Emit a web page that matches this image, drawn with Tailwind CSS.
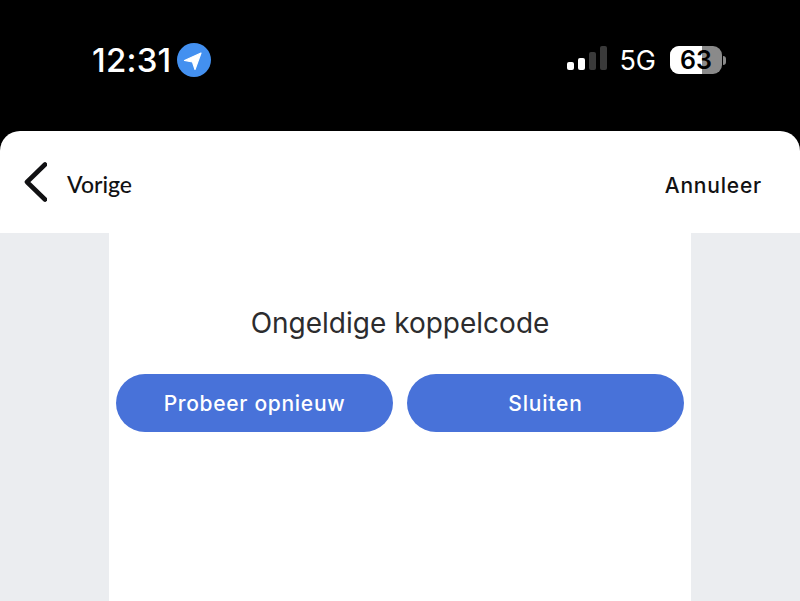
<!DOCTYPE html>
<html lang="nl">
  <head>
    <meta charset="UTF-8" />
    <meta name="viewport" content="width=device-width, initial-scale=1.0" />
    <title>Koppelcode</title>
    <script src="https://cdn.jsdelivr.net/npm/@tailwindcss/browser@4"></script>
  </head>
  <body class="bg-black h-[601px] w-[800px] overflow-hidden flex flex-col font-['Inter',sans-serif]">
    <!-- status bar -->
    <div class="h-[131px] shrink-0 flex justify-between items-start pt-[43px] pl-[92px] pr-[74px] text-white">
      <div class="flex items-center gap-[6px] h-[34px]">
        <span class="text-[33px] font-medium leading-none tracking-[0.2px]">12:31</span>
        <svg width="34" height="34" viewBox="0 0 34 34">
          <circle cx="17" cy="17" r="17" fill="#4390f0" />
          <path d="M7.5 17.5 L24 10 L18 26.5 L15.5 19 Z" fill="#fff" stroke="#fff" stroke-width="1.2" stroke-linejoin="round" />
        </svg>
      </div>
      <div class="flex items-center h-[34px]">
        <div class="flex items-end gap-[4px] h-[24px] mb-[4px] mr-[12px]">
          <div class="w-[7px] h-[8px] rounded-[2px] bg-white"></div>
          <div class="w-[7px] h-[12px] rounded-[2px] bg-white"></div>
          <div class="w-[7px] h-[18px] rounded-[2px] bg-[#3a3a3a]"></div>
          <div class="w-[7px] h-[24px] rounded-[2px] bg-[#3a3a3a]"></div>
        </div>
        <span class="text-[27px] leading-none mr-[14px]">5G</span>
        <div class="relative w-[52px] h-[28px] rounded-[9px] overflow-hidden bg-[#8a8a8a] flex items-center justify-center">
          <div class="absolute left-0 top-0 bottom-0 w-[32px] bg-white"></div>
          <span class="relative text-[25px] font-semibold text-black leading-none">63</span>
        </div>
        <div class="w-[3px] h-[9px] ml-[1px] rounded-r-full bg-[#8a8a8a]"></div>
      </div>
    </div>

    <!-- sheet -->
    <div class="flex-1 flex flex-col bg-white rounded-t-[20px] overflow-hidden">
      <header class="h-[102px] shrink-0 flex items-center justify-between pl-[24px] pr-[38px] text-[#111113]">
        <div class="flex items-center gap-[20px]">
          <svg width="23" height="40" viewBox="0 0 23 40" fill="none">
            <path d="M21 2.5 L3 20 L21 37.5" stroke="#111113" stroke-width="4.6" stroke-linecap="round" stroke-linejoin="round" />
          </svg>
          <span class="font-['Lato',sans-serif] text-[23px] font-medium leading-none mt-[5px]">Vorige</span>
        </div>
        <span class="text-[21px] font-medium leading-none tracking-[0.8px] mt-[6px]">Annuleer</span>
      </header>
      <div class="flex-1 bg-[#ebedf0] flex justify-center">
        <main class="w-[582px] bg-white flex flex-col items-center px-[7px] pt-[72px]">
          <p class="text-[28px] leading-[36px] text-[#2c2c2e]">Ongeldige koppelcode</p>
          <div class="w-full flex gap-[14px] mt-[33px]">
            <button class="flex-1 h-[58px] pt-[2px] rounded-full bg-[#4872d9] text-white text-[21px] font-medium tracking-[0.7px]">Probeer opnieuw</button>
            <button class="flex-1 h-[58px] pt-[2px] rounded-full bg-[#4872d9] text-white text-[21px] font-medium tracking-[0.8px]">Sluiten</button>
          </div>
        </main>
      </div>
    </div>
  </body>
</html>
